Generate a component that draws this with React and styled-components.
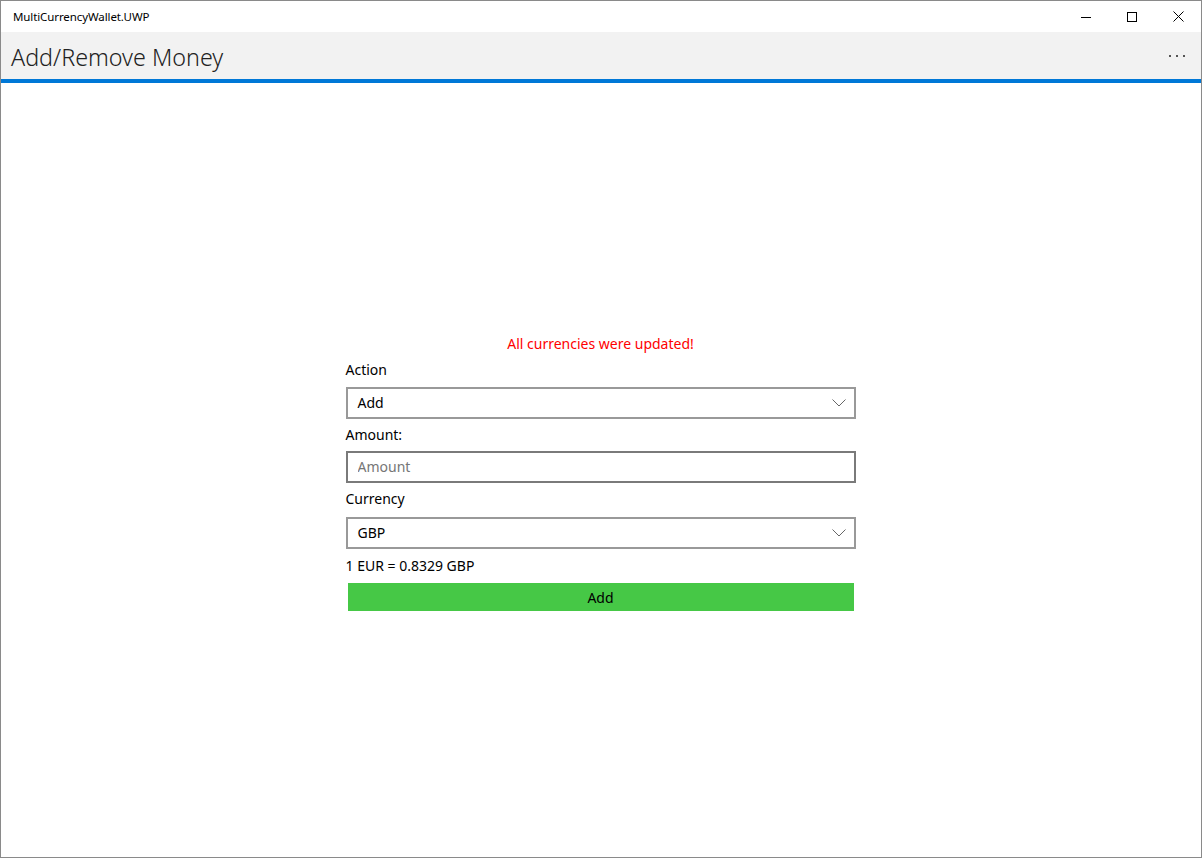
import styled, { createGlobalStyle } from "styled-components";

const GlobalStyle = createGlobalStyle`
  html, body {
    margin: 0;
    padding: 0;
    background: #fff;
  }
  body {
    font-family: "Noto Sans", "Open Sans", sans-serif;
    color: #000;
  }
`;

function Chevron() {
  return (
    <svg width='14' height='8' viewBox='0 0 14 8'>
      <polyline
        points='0.5,0.5 7,7 13.5,0.5'
        fill='none'
        stroke='#666'
        strokeWidth='1'
      />
    </svg>
  );
}

function App() {
  return (
    <>
      <GlobalStyle />
      <Window>
        <TitleBar>
          <AppName>MultiCurrencyWallet.UWP</AppName>
          <Controls>
            <ControlButton aria-label='minimize'>
              <svg width='10' height='10' viewBox='0 0 10 10'>
                <line x1='0' y1='5.5' x2='10' y2='5.5' stroke='#000' strokeWidth='1' />
              </svg>
            </ControlButton>
            <ControlButton aria-label='maximize'>
              <svg width='10' height='10' viewBox='0 0 10 10'>
                <rect x='0.5' y='0.5' width='9' height='9' fill='none' stroke='#000' strokeWidth='1' />
              </svg>
            </ControlButton>
            <ControlButton aria-label='close'>
              <svg width='11' height='11' viewBox='0 0 11 11'>
                <path d='M0.5 0.5 L10.5 10.5 M10.5 0.5 L0.5 10.5' stroke='#000' strokeWidth='1' />
              </svg>
            </ControlButton>
          </Controls>
        </TitleBar>
        <Header>
          <PageTitle>Add/Remove Money</PageTitle>
          <MoreButton aria-label='more'>
            <Dot />
            <Dot />
            <Dot />
          </MoreButton>
        </Header>
        <Content>
          <Form>
            <Status>All currencies were updated!</Status>
            <Label $top={6}>Action</Label>
            <Combo $top={7}>
              <span>Add</span>
              <Chevron />
            </Combo>
            <Label $top={6}>Amount:</Label>
            <TextBox $top={6} placeholder='Amount' />
            <Label $top={6}>Currency</Label>
            <Combo $top={8}>
              <span>GBP</span>
              <Chevron />
            </Combo>
            <Label $top={7}>1 EUR = 0.8329 GBP</Label>
            <AddButton>Add</AddButton>
          </Form>
        </Content>
      </Window>
    </>
  );
}

const Window = styled.div`
  box-sizing: border-box;
  width: 1202px;
  height: 858px;
  border: 1px solid #8a8a8a;
  display: flex;
  flex-direction: column;
  background: #fff;
`;

const TitleBar = styled.div`
  height: 31px;
  display: flex;
  align-items: center;
  justify-content: space-between;
  background: #fff;
`;

const AppName = styled.div`
  padding-left: 12px;
  font-size: 11.5px;
  letter-spacing: -0.1px;
  color: #000;
`;

const Controls = styled.div`
  display: flex;
  height: 100%;
`;

const ControlButton = styled.button`
  width: 46px;
  height: 100%;
  border: none;
  background: transparent;
  display: flex;
  align-items: center;
  justify-content: center;
  padding: 0;
`;

const Header = styled.div`
  height: 47px;
  background: #f2f2f2;
  border-bottom: 4px solid #0078d7;
  display: flex;
  align-items: center;
  justify-content: space-between;
`;

const PageTitle = styled.h1`
  margin: 2px 0 0;
  padding-left: 10px;
  font-size: 23.3px;
  font-weight: 300;
  color: #222;
`;

const MoreButton = styled.div`
  display: flex;
  gap: 5px;
  padding-right: 16px;
  align-items: center;
`;

const Dot = styled.span`
  width: 2px;
  height: 2px;
  background: #555;
`;

const Content = styled.div`
  flex: 1;
  display: flex;
  justify-content: center;
  align-items: flex-start;
  padding-top: 251px;
`;

const Form = styled.div`
  width: 510px;
  display: flex;
  flex-direction: column;
  margin-right: 1px;
`;

const Status = styled.div`
  height: 20px;
  line-height: 20px;
  text-align: center;
  color: #ff0000;
  font-size: 14px;
`;

const Label = styled.div`
  margin-top: ${props => props.$top}px;
  height: 20px;
  line-height: 20px;
  font-size: 14px;
  color: #000;
`;

const Combo = styled.div`
  margin-top: ${props => props.$top}px;
  box-sizing: border-box;
  height: 32px;
  border: 2px solid #999;
  display: flex;
  align-items: center;
  justify-content: space-between;
  padding: 0 8px 1px 10px;
  font-size: 14px;
`;

const TextBox = styled.input`
  margin-top: ${props => props.$top}px;
  box-sizing: border-box;
  width: 100%;
  height: 32px;
  border: 2px solid #7a7a7a;
  padding: 0 10px 1px;
  font-family: inherit;
  font-size: 14px;
  outline: none;
  &::placeholder {
    color: #767676;
  }
`;

const AddButton = styled.button`
  margin: 7px 2px 0;
  height: 28px;
  border: none;
  background: #46c846;
  color: #000;
  font-family: inherit;
  font-size: 14px;
  padding: 0;
`;

export default App;
